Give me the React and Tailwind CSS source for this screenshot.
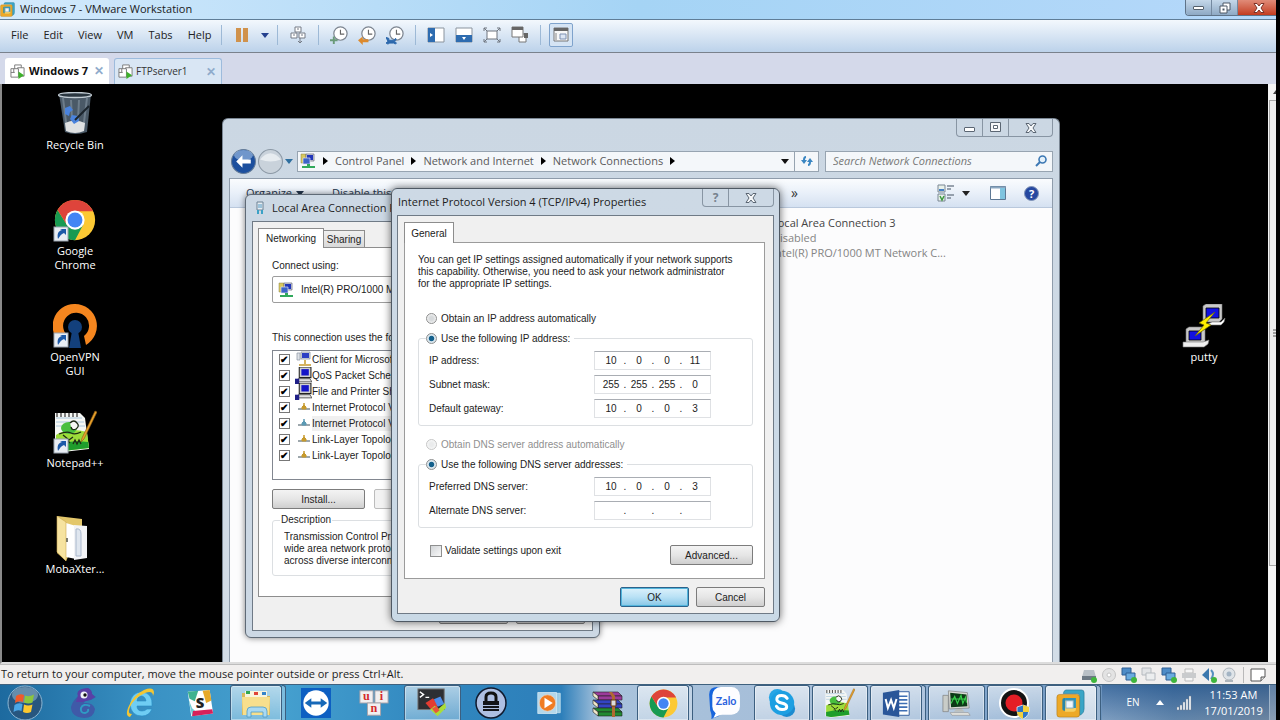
import { useState } from "react";
import clsx from "clsx";

/* ---------- small drawings ---------- */

const Svg = ({ size = 32, box = 32, className, children }) => (
  <svg width={size} height={size} viewBox={`0 0 ${box} ${box}`} className={clsx("shrink-0", className)} aria-hidden="true">
    {children}
  </svg>
);

const ArrowDown = ({ className }) => (
  <svg width="8" height="5" viewBox="0 0 8 5" className={clsx("shrink-0", className)} aria-hidden="true">
    <path d="M0 0h8L4 5z" fill="currentColor" />
  </svg>
);

const ArrowRight = () => (
  <svg width="5" height="8" viewBox="0 0 5 8" className="shrink-0 text-black" aria-hidden="true">
    <path d="M0 0v8l5-4z" fill="currentColor" />
  </svg>
);

const VmwareIcon = ({ size }) => (
  <Svg size={size}>
    <path d="M11 1h17q3 0 3 3v18q0 4-3 6l-2 1V8q0-3-3-3H8q1-4 3-4z" fill="#3aa5c6" stroke="#1c6f8d" strokeWidth=".6" />
    <path d="M4 6h19q3 0 3 3v19q0 3-3 3H4q-3 0-3-3V9q0-3 3-3z" fill="#eda928" stroke="#a9741a" strokeWidth=".6" />
    <path d="M7 12q0-2 2-2h12v14H9q-2 0-2-2z" fill="#2887a8" />
    <path d="M10 10h12v12q0 3-3 3H10z" fill="#f6cf62" />
    <path d="M10 10h12v11h-3v-8h-9z" fill="#2f93b8" />
    <rect x="11" y="13" width="8" height="8" fill="#eef6fb" stroke="#7ba8c4" />
  </Svg>
);

const VmTabIcon = () => (
  <Svg size={15} box={16}>
    <g fill="#fff" stroke="#777" strokeWidth="1">
      <path d="M5 1h7v7H5z" />
      <path d="M8 4h7v9H8z" />
      <path d="M1 5h8v9H1z" />
      <path d="M4 5v4M1 9h4" />
    </g>
    <path d="M9 8l6 4-6 4z" fill="#3db02a" />
  </Svg>
);

const ClockFace = ({ children }) => (
  <Svg size={19} box={20}>
    <circle cx="11" cy="8" r="7" fill="#fff" stroke="#7d8590" strokeWidth="1.3" />
    <path d="M11 4v4.500h4" fill="none" stroke="#666" strokeWidth="1.2" />
    {children}
  </Svg>
);

const ChromeIcon = ({ size = 42 }) => (
  <Svg size={size} box={48}>
    <circle cx="24" cy="24" r="23" fill="#fcc934" />
    <path d="M4.100 12.500A23 23 0 0 0 24 47L33.500 29 24 24 14.500 29z" fill="#189a52" />
    <path d="M4.100 12.500L14.500 29 24 14h20.700a23 23 0 0 0-.8-1.500A23 23 0 0 0 4.100 12.500z" fill="#de443b" />
    <circle cx="24" cy="24" r="11" fill="#fff" />
    <circle cx="24" cy="24" r="8.500" fill="#4285f4" />
  </Svg>
);

const Shortcut = () => (
  <g>
    <rect x="1" y="29" width="14" height="14" fill="#e9eef4" stroke="#9aa4b0" />
    <path d="M5 41c-1-5 0-8 4-9l-2-1h6v6l-2-2c-3 1-4 3-6 6z" fill="#1d5aa8" />
  </g>
);

const RecycleBinIcon = () => (
  <Svg size={44} box={44}>
    <path d="M6 2h32l-4 38q-12 4-22 0z" fill="#4a5967" />
    <path d="M10 6l4 32M34 6l-4 32M18 8l1 20M26 8l-1 20" stroke="#8595a3" strokeWidth="2" opacity=".6" />
    <path d="M12 31q10-5 20 0l-1 8q-9 4-18 0z" fill="#dfe1e2" />
    <path d="M12 16l5-2 3 4-3 2-1 4-4-2zM17 27l2-4 6 1 1 5-5 3z" fill="#4a83dd" />
    <path d="M22 28L36 14" stroke="#1b242c" strokeWidth="2" />
    <ellipse cx="22" cy="3" rx="16.500" ry="2.500" fill="#2a3640" stroke="#c2ccd4" strokeWidth="1.300" />
  </Svg>
);

const ChromeShortcut = () => (
  <div className="relative h-11 w-11 p-px">
    <ChromeIcon size={42} />
    <Svg size={44} box={44} className="absolute left-0 top-0">
      <Shortcut />
    </Svg>
  </div>
);

const OpenVpnIcon = () => (
  <Svg size={44} box={44}>
    <path d="M22 0a22 22 0 0 0-13 40l5-9a13 13 0 1 1 17 1l2 9A22 22 0 0 0 22 0z" fill="#f5861f" />
    <circle cx="22" cy="23" r="7" fill="#13407c" />
    <path d="M19 27h6l3 17H16z" fill="#13407c" />
    <Shortcut />
  </Svg>
);

const NotepadIcon = ({ size = 44, shortcut = true }) => (
  <Svg size={size} box={44}>
    <path d="M2 3h25l5 5 4 31-26 3L2 40z" fill="#f5f7f4" />
    <path d="M3 8h26M3 12h28M3 16h29" stroke="#aac6dc" strokeWidth="1" />
    <path d="M4 3v4M8 3v4M12 3v4M16 3v4M20 3v4M24 3v4" stroke="#555" strokeWidth="1.500" />
    <path d="M3 25q12-8 31-3l2 16-26 3-7-2z" fill="#9ddc3a" />
    <path d="M3 34q16-4 32-2l1 6-26 3-7-1z" fill="#1f9d2c" />
    <ellipse cx="16" cy="18" rx="8" ry="6" fill="#49bf3f" />
    <path d="M17 13q4-4 7 0 3 3-1 6-4 2-5-2" fill="#f5f7f4" stroke="#1d2b15" strokeWidth="1.300" />
    <path d="M6 24q8-3 12-1t10-1M10 25l6 5 4-3M14 30l3 3M20 34l2-4 2 4 2-4 2 4" fill="none" stroke="#1d2b15" strokeWidth="1.300" />
    <path d="M42 1l2 1-13 27-3 3 1-4z" fill="#e8a12b" stroke="#8b5a16" strokeWidth=".6" />
    {shortcut && <Shortcut />}
  </Svg>
);

const FolderIcon = () => (
  <Svg size={46} box={46}>
    <path d="M5 0l25 3v9l-16 33L5 37z" fill="#e3c76b" />
    <path d="M14 7l10 3v33l-10-2z" fill="#fff" />
    <path d="M22 9l13 1v32l-13 2z" fill="#f2f3f6" />
    <path d="M24 13q5-1 5 5v22h-5z" fill="#dfe6ef" stroke="#a9b7cc" strokeWidth="1" />
    <path d="M5 0l9 6v39L5 36z" fill="#f6e3a0" stroke="#cda94e" strokeWidth=".6" />
    <path d="M15 22v4" stroke="#554" strokeWidth="1.500" />
  </Svg>
);

const PuttyIcon = () => (
  <Svg size={44} box={44}>
    <g fill="#c9c9c9" stroke="#777" strokeWidth=".6">
      <path d="M21 2l3-2h16v15l-3 3H21z" />
      <path d="M30 18h9l4-4-1 4-3 3H24z" fill="#fff" />
      <path d="M4 25l3-2h16v15l-3 3H4z" />
      <path d="M1 38h20l6-2-1 4-4 3H1z" fill="#efefef" />
    </g>
    <path d="M24 4h13v10H24zM7 27h12v9H7z" fill="#1212e0" stroke="#000" strokeWidth=".8" />
    <path d="M33 8L17 19l5 2-9 11 16-11-5-2z" fill="#ffee00" stroke="#6c6500" strokeWidth=".7" />
  </Svg>
);

const PcIcon = ({ size = 16 }) => (
  <Svg size={size} box={16}>
    <path d="M1 1h5v9H1z" fill="#d8c85c" stroke="#88814a" strokeWidth=".5" />
    <path d="M6 1h8v7H6z" fill="#d4dbe6" stroke="#667" strokeWidth=".7" />
    <path d="M7 2h6v5H7z" fill="#2136ba" />
    <path d="M3 5h7v6H3z" fill="#3c64c8" stroke="#dde" strokeWidth=".7" />
    <path d="M7 11h3v2h5v2H2v-2h5z" fill="#31a95c" />
  </Svg>
);

const ClientIcon = () => (
  <Svg size={16} box={16}>
    <path d="M1 2h3v7H1z" fill="#dfe3e8" stroke="#8a94a0" strokeWidth=".7" />
    <path d="M5 1h9v7H5z" fill="#dde2ea" stroke="#7c8694" strokeWidth=".7" />
    <path d="M6 2h7v5H6z" fill="#2b3fc4" />
    <path d="M9 9v4M3 14h12" stroke="#c79a2c" strokeWidth="1.500" />
  </Svg>
);

const ServiceIcon = () => (
  <Svg size={17} box={16}>
    <path d="M4 0h11v10H4z" fill="#cfcfcf" stroke="#222" strokeWidth="1" />
    <path d="M6 2h7v6H6z" fill="#1414c8" />
    <path d="M3 11h11l2 3H3z" fill="#e2e2e2" stroke="#333" strokeWidth=".7" />
    <path d="M0 11h4v5H0z" fill="#202088" />
  </Svg>
);

const ProtocolIcon = ({ color }) => (
  <Svg size={14} box={14}>
    <path d="M1 9h12" stroke="#7c8a90" strokeWidth="1.500" />
    <path d="M5 9V7l2-2 2 2v2z" fill={color} stroke={color} />
    <path d="M7 3v3" stroke={color} strokeWidth="1.500" />
  </Svg>
);

const CaptionX = ({ fill = "#f5f7f9", stroke = "#5b6673" }) => (
  <svg width="12" height="10" viewBox="0 0 12 10" aria-hidden="true">
    <path d="M1 .5h3l2 2.500 2-2.500h3L8 5l3 4.500H8L6 7 4 9.500H1L4 5z" fill={fill} stroke={stroke} strokeWidth="1" />
  </svg>
);

/* ---------- taskbar pictures ---------- */

const StartOrb = () => (
  <Svg size={36} box={36}>
    <circle cx="18" cy="18" r="17" fill="#27567f" stroke="#8db6d3" strokeWidth="1" />
    <ellipse cx="18" cy="10" rx="13" ry="8" fill="#a3c3d9" opacity=".5" />
    <path d="M9 11q4-3 8-1l-1 7q-4-2-8 1z" fill="#f0592a" />
    <path d="M18 10.500q4 2 9-1l-1.500 8q-4 2-8.500 0z" fill="#8cc63e" />
    <path d="M7.500 20q4-3 8-1l-1 7q-4-2-8 1z" fill="#4aa7e8" />
    <path d="M17 19.500q4 2 8.500 0L24 27q-4 2-8 0z" fill="#fdc82f" />
  </Svg>
);

const ChameleonIcon = () => (
  <Svg>
    <path d="M11 9Q9 4 15 2l6-1q4 2 4 6l4 3-5 3q-7 0-7 3 9-1 11 6-1 9-11 9-13-1-13-11 1-5 7-11z" fill="#3f5aa8" />
    <path d="M11 9Q9 4 15 2l6-1q4 2 4 6l3 3-5 3-8 2-6 0z" fill="#5a3fa6" />
    <path d="M23 19q-7-3-9 2-1 5 4 5 4-1 3-4" fill="none" stroke="#2f9bc4" strokeWidth="2" />
    <circle cx="17" cy="8" r="3.500" fill="#f0f3f8" />
    <circle cx="18" cy="8" r="1.700" fill="#111" />
  </Svg>
);

const IeIcon = () => (
  <Svg>
    <path d="M27 19H12q0 5 5 5 3 0 5-2h5q-3 7-10 7Q6 29 5 17 6 5 17 5q11 1 10 14zM12 14h9q-1-5-5-5-4 1-4 5z" fill="#6fcdf3" stroke="#258cc5" strokeWidth=".6" />
    <path d="M5 30q-5-1-2-9Q8 8 19 3q10-4 10 3l-1 3q0-6-8-3Q9 11 5 20q-3 7 2 7z" fill="#f3c634" />
  </Svg>
);

const SlackIcon = () => (
  <Svg size={28}>
    <path d="M2 3l25-2 4 27-25 3z" fill="#fff" />
    <path d="M2 3l12-1-4 12-6-3z" fill="#3fb28f" />
    <path d="M19 2l8-1 2 12-6 3z" fill="#e6a92a" />
    <path d="M3 12l4 19 9-1-9-8z" fill="#6fcbd3" />
    <path d="M8 25l22-2 1 5-24 3z" fill="#d7205a" />
    <text x="16" y="22" textAnchor="middle" fontSize="17" fontWeight="800" fontFamily="Open Sans, sans-serif" fill="#222">S</text>
  </Svg>
);

const ExplorerIcon = () => (
  <Svg>
    <path d="M2 6h10l3 3h15v19H2z" fill="#d9b85b" />
    <path d="M5 4h22v6H5z" fill="#f8f4df" />
    <path d="M6 4h4v3H6z" fill="#34a853" />
    <path d="M14 5h4v3h-4z" fill="#df4438" />
    <path d="M22 5h4v3h-4z" fill="#3684ca" />
    <path d="M2 10h28l-1 18H3z" fill="#f7df8d" />
    <path d="M7 30v-6q0-4 4-4h12q4 0 4 4v6h-4v-5H11v5z" fill="#a9d9f2" stroke="#4d9ac7" strokeWidth=".8" />
  </Svg>
);

const TeamViewerIcon = () => (
  <Svg size={30}>
    <rect width="32" height="32" fill="#0d5fc2" />
    <circle cx="16" cy="16" r="13.500" fill="#fff" />
    <path d="M4 16l7-5v3.500h10V11l7 5-7 5v-3.500H11V21z" fill="#1668b8" />
  </Svg>
);

const UnikeyIcon = () => (
  <Svg size={30}>
    {[["u", 1, 3], ["i", 17, 3], ["n", 9, 16]].map(([ch, x, y]) => (
      <g key={ch}>
        <rect x={x} y={y} width="14" height="13" fill="#f1eff0" stroke="#a9a2a8" />
        <text x={x + 7} y={y + 10} textAnchor="middle" fontSize="13" fontWeight="700" fontFamily="Liberation Serif, serif" fill="#d52a2a">{ch}</text>
      </g>
    ))}
  </Svg>
);

const MobaIcon = () => (
  <Svg size={30}>
    <rect x="1" y="1" width="28" height="22" fill="#2d2f33" stroke="#777" />
    <path d="M3 4l4 3-4 3M9 10h4" fill="none" stroke="#fff" strokeWidth="1.500" />
    <path d="M9 16l8-5 6 7-8 5z" fill="#e33c31" />
    <path d="M18 12l7-3 4 8-7 3z" fill="#4d8de8" />
    <path d="M14 23l5-4 4 3 7-6 1 5-9 9z" fill="#a9dd3a" />
    <path d="M16 22l5-3 3 5-4 3z" fill="#e8553b" />
  </Svg>
);

const LockIcon = () => (
  <Svg>
    <circle cx="16" cy="16" r="15" fill="#aebfe2" stroke="#111a2e" strokeWidth="1.500" />
    <path d="M11 15v-5q0-4 5-4t5 4v5" fill="none" stroke="#111" strokeWidth="3" />
    <path d="M8 14h16v4H8zM8 19h16v2H8zM8 22h16v2H8z" fill="#14151a" />
  </Svg>
);

const MediaIcon = () => (
  <Svg size={24}>
    <path d="M8 3h23v26H8z" fill="#9ccbe3" stroke="#c9e3ef" />
    <path d="M1 2h25v28H1z" fill="#b3d7ea" stroke="#d5eaf4" />
    <circle cx="14" cy="16" r="11" fill="#f07c22" stroke="#e7d6c8" />
    <path d="M10 9l11 7-11 7z" fill="#fff" />
  </Svg>
);

const WinrarIcon = () => (
  <Svg>
    {[["#9b3b9b", 5], ["#3344c4", 13], ["#228a32", 21]].map(([c, y]) => (
      <g key={y}>
        <path d={`M2 ${y}h25l4 4H7z`} fill={c} stroke="#222" strokeWidth=".6" />
        <path d={`M7 ${y + 4}h24v4H7z`} fill={c} stroke="#222" strokeWidth=".6" />
        <path d={`M2 ${y}l5 4v4l-5-4z`} fill="#f1e8cb" stroke="#222" strokeWidth=".6" />
      </g>
    ))}
    <path d="M18 5h3l3 4v21h-3V10z" fill="#b06a31" />
    <path d="M20 13h5v6h-5z" fill="#ddd" stroke="#6b3a15" />
  </Svg>
);

const ZaloIcon = () => (
  <Svg size={34}>
    <path d="M2 8q0-7 8-7h5Q5 7 6 17q1 8 6 11l-8 3q1-3-1-8z" fill="#1765dd" />
    <rect x="5" y="1" width="26" height="26" rx="8" fill="#fdfdff" />
    <path d="M9 24l-3 6 9-4z" fill="#fff" />
    <text x="18" y="18" textAnchor="middle" fontSize="10" fontWeight="700" fontFamily="Lato, sans-serif" fill="#2a62dd">Zalo</text>
  </Svg>
);

const SkypeIcon = () => (
  <Svg size={30}>
    <circle cx="11" cy="10" r="9" fill="#27a5e5" />
    <circle cx="21" cy="22" r="9" fill="#1b8bd0" />
    <circle cx="16" cy="16" r="13" fill="#1c9fe2" />
    <path d="M21.500 11q-2-3-6-3-5 0-5 4 0 3 5 4 5.500 1 5.500 4t-5 3q-4 0-6-3.500" fill="none" stroke="#fff" strokeWidth="3.200" strokeLinecap="round" />
  </Svg>
);

const WordIcon = () => (
  <Svg size={29}>
    <path d="M14 3h16v26H14z" fill="#fff" stroke="#2b579a" />
    <path d="M18 8h10M18 12h10M18 16h10M18 20h10M18 24h10" stroke="#3f6fb4" strokeWidth="1.700" />
    <path d="M1 4l18-3v30L1 28z" fill="#2a5699" />
    <path d="M4 11l2.500 10L10 12l3 9 3-10" fill="none" stroke="#fff" strokeWidth="2.200" />
  </Svg>
);

const MonitorIcon = () => (
  <Svg size={29}>
    <path d="M1 7h6v18H1z" fill="#c9ccc8" stroke="#777" strokeWidth=".7" />
    <path d="M7 2l21 2 2 17-22 1z" fill="#d9dad5" stroke="#777" strokeWidth=".7" />
    <path d="M9 4l18 2 1 13-18 1z" fill="#0d3a16" />
    <path d="M10 16l4-8 3 8 4-9 2 9 3-7 1 6M10 11h16" fill="none" stroke="#38d34c" strokeWidth="1.200" />
    <path d="M16 22h6l3 3H13z" fill="#bcbfbd" />
    <path d="M9 26h20l2 3H11z" fill="#e4e4df" stroke="#888" strokeWidth=".6" />
  </Svg>
);

const RecordIcon = () => (
  <Svg>
    <circle cx="15" cy="16" r="14" fill="#131313" stroke="#fff" strokeWidth="2" />
    <circle cx="15" cy="16" r="8.500" fill="#e41e26" />
    <path d="M18 20l6-2 6 2q1 9-6 12-7-3-6-12z" fill="#2d76c5" stroke="#fff" strokeWidth=".7" />
    <path d="M24 18l6 2v5h-6zM18 25h6v7q-6-3-6-7z" fill="#f3d13d" />
  </Svg>
);

/* ---------- data ---------- */

const menus = ["File", "Edit", "View", "VM", "Tabs", "Help"];

const desktopIcons = [
  { name: "Recycle Bin", Icon: RecycleBinIcon },
  { name: "Google Chrome", Icon: ChromeShortcut },
  { name: "OpenVPN GUI", Icon: OpenVpnIcon },
  { name: "Notepad++", Icon: NotepadIcon },
  { name: "MobaXter...", Icon: FolderIcon },
];

const connectionItems = [
  { label: "Client for Microsoft", icon: <ClientIcon /> },
  { label: "QoS Packet Scheduler", icon: <ServiceIcon /> },
  { label: "File and Printer Sharing", icon: <ServiceIcon /> },
  { label: "Internet Protocol V6", icon: <ProtocolIcon color="#c79a2c" /> },
  { label: "Internet Protocol V4", icon: <ProtocolIcon color="#5c9ab4" />, selected: true },
  { label: "Link-Layer Topology", icon: <ProtocolIcon color="#c79a2c" /> },
  { label: "Link-Layer Topology", icon: <ProtocolIcon color="#c79a2c" /> },
];

const taskbarApps = [
  { name: "Chameleon", icon: <ChameleonIcon /> },
  { name: "Internet Explorer", icon: <IeIcon /> },
  { name: "Slack", icon: <SlackIcon /> },
  { name: "Explorer", icon: <ExplorerIcon />, open: true, stacked: true },
  { name: "TeamViewer", icon: <TeamViewerIcon /> },
  { name: "UniKey", icon: <UnikeyIcon /> },
  { name: "MobaXterm", icon: <MobaIcon />, open: true },
  { name: "Password safe", icon: <LockIcon /> },
  { name: "Media Player", icon: <MediaIcon /> },
  { name: "WinRAR", icon: <WinrarIcon /> },
  { name: "Chrome", icon: <ChromeIcon size={29} />, open: true, stacked: true },
  { name: "Zalo", icon: <ZaloIcon /> },
  { name: "Skype", icon: <SkypeIcon />, open: true },
  { name: "Notepad", icon: <NotepadIcon size={31} shortcut={false} />, open: true },
  { name: "Word", icon: <WordIcon />, open: true, stacked: true },
  { name: "Monitor", icon: <MonitorIcon />, open: true },
  { name: "Recorder", icon: <RecordIcon />, open: true },
  { name: "VMware", icon: <VmwareIcon size={29} />, open: true, stacked: true, active: true },
];

/* ---------- host window ---------- */

function TitleBar() {
  return (
    <header className="flex h-5 shrink-0 items-start border-b border-[#5f7d97] bg-gradient-to-r from-[#d3eafc] via-[#a5d4f5] to-[#b5d8fa]">
      <div className="flex h-[19px] flex-1 items-center gap-[5px]">
        <VmwareIcon size={15} />
        <h1 className="text-[11px] text-[#1a1a1a]">Windows 7 - VMware Workstation</h1>
      </div>
      <div className="flex h-4 overflow-hidden rounded-bl border-b border-l border-[#5f7388]">
        <button aria-label="Minimize" className="flex w-[26px] items-center justify-center border-r border-[#7489a0] bg-gradient-to-b from-[#c5d8ea] to-[#8ea9c4]">
          <span className="h-1 w-[11px] rounded-[1px] border border-[#55606c] bg-white" />
        </button>
        <button aria-label="Restore" className="flex w-[26px] items-center justify-center border-r border-[#7489a0] bg-gradient-to-b from-[#c5d8ea] to-[#8ea9c4]">
          <Svg size={12} box={12}>
            <path d="M4 1h7v7H4z" fill="#fff" stroke="#4c5866" />
            <path d="M1 4h7v7H1z" fill="#fff" stroke="#4c5866" />
            <path d="M3.500 6.500h2v2h-2z" fill="#4c5866" />
          </Svg>
        </button>
        <button aria-label="Close" className="flex w-[38px] items-center justify-center bg-gradient-to-b from-[#e08b78] to-[#c23a1d] pl-1">
          <CaptionX fill="#fff" stroke="#7d3328" />
        </button>
      </div>
    </header>
  );
}

const Separator = () => <span className="h-5 w-px shrink-0 bg-[#9db9d6]" />;

const ToolButton = ({ label, boxed, children }) => (
  <button
    aria-label={label}
    className={clsx("flex h-6 w-6 shrink-0 items-center justify-center rounded-[2px]", boxed && "border border-[#7fa3cc] bg-[#d5e4f4]")}
  >
    {children}
  </button>
);

function MenuBar() {
  return (
    <div className="flex h-[33px] shrink-0 items-center border-b border-[#79818c] bg-gradient-to-b from-[#f3f8fd] to-[#bcd2ea] pb-[2px] pl-[11px]">
      <nav className="flex w-[210px] gap-[15px] text-[11px] text-[#222]">
        {menus.map((m) => (
          <button key={m}>{m}</button>
        ))}
      </nav>
      <Separator />
      <div className="flex items-center gap-[7px] px-2">
        <ToolButton label="Suspend">
          <Svg size={14} box={14}>
            <path d="M1 0h5v14H1zM8 0h5v14H8z" fill="#d0924c" />
          </Svg>
        </ToolButton>
        <ArrowDown className="text-[#24408e]" />
      </div>
      <Separator />
      <div className="px-2">
        <ToolButton label="Send Ctrl+Alt+Del">
          <Svg size={18} box={18}>
            <g fill="#fff" stroke="#747b85">
              <path d="M6 1h6v5H6zM2 7h6v5H2zM10 7h6v5h-6z" />
              <path d="M4 9h2M12 9h2M8 3h2M11 12v5M9 15l2 2 2-2" fill="none" />
            </g>
          </Svg>
        </ToolButton>
      </div>
      <Separator />
      <div className="flex gap-1 px-2">
        <ToolButton label="Take snapshot">
          <ClockFace>
            <path d="M4 11v8M0 15h8" stroke="#6a9a78" strokeWidth="2" />
          </ClockFace>
        </ToolButton>
        <ToolButton label="Revert snapshot">
          <ClockFace>
            <path d="M0 15l5-4v3h6v3H5v3z" fill="#dc8a2e" />
          </ClockFace>
        </ToolButton>
        <ToolButton label="Manage snapshots">
          <ClockFace>
            <path d="M0 12l3 1v2h5l2-2 1 1-2 2 2 2-1 1-2-1H4l-2 1-2-1 2-2z" fill="#2d69ad" stroke="#2d69ad" />
          </ClockFace>
        </ToolButton>
      </div>
      <Separator />
      <div className="flex gap-1 px-2">
        <ToolButton label="Show library">
          <Svg size={18} box={18}>
            <path d="M1 2h16v14H1z" fill="#fff" stroke="#8a939d" />
            <path d="M1 2h7v14H1z" fill="#2e6cb0" />
            <path d="M3 7l3 2-3 2z" fill="#fff" />
          </Svg>
        </ToolButton>
        <ToolButton label="Show thumbnails">
          <Svg size={18} box={18}>
            <path d="M1 2h16v14H1z" fill="#fff" stroke="#8a939d" />
            <path d="M1 9h16v7H1z" fill="#2e6cb0" />
            <path d="M7 11h4l-2 3z" fill="#fff" />
          </Svg>
        </ToolButton>
        <ToolButton label="Full screen">
          <Svg size={18} box={18}>
            <path d="M4 5h10v8H4z" fill="#fff" stroke="#6e757e" />
            <path d="M1 5V2h3M14 2h3v3M17 13v3h-3M4 16H1v-3M1 2l3 3M17 2l-3 3M17 16l-3-3M1 16l3-3" fill="none" stroke="#6e757e" />
          </Svg>
        </ToolButton>
        <ToolButton label="Unity">
          <Svg size={18} box={18}>
            <path d="M8 8h7v8H8z" fill="#fff" stroke="#777" />
            <path d="M1 1h11v10H1z" fill="#fff" stroke="#777" />
            <path d="M1 1h11v3H1zM13 7h4v5h-4z" fill="#666" />
          </Svg>
        </ToolButton>
      </div>
      <Separator />
      <div className="px-2">
        <ToolButton label="Console view" boxed>
          <Svg size={16} box={16}>
            <path d="M1 1h14v13H1z" fill="#f7f7f7" stroke="#777" />
            <path d="M1 1h14v3H1z" fill="#666" />
            <path d="M7 7h6v5H7z" fill="#dce6f4" stroke="#7c90b2" />
            <path d="M3 6v7" stroke="#888" />
          </Svg>
        </ToolButton>
      </div>
    </div>
  );
}

function VmTabs() {
  return (
    <div className="flex h-[31px] shrink-0 items-end gap-[5px] bg-[#d4d9ea] pl-[5px]">
      <div className="flex h-[26px] w-[104px] items-center rounded-t-[3px] bg-white pl-[5px]">
        <VmTabIcon />
        <button className="flex-1 pl-1 text-left text-[11px] font-bold text-[#111]">Windows 7</button>
        <button aria-label="Close Windows 7" className="mr-[5px] text-[12px] font-bold text-[#8fabcb]">✕</button>
      </div>
      <div className="flex h-[26px] w-[108px] items-center rounded-t-[3px] border border-b-0 border-[#9dbbdc] bg-[#d9e6f4] pl-[3px]">
        <VmTabIcon />
        <button className="flex-1 pl-[3px] text-left text-[10px] text-[#333]">FTPserver1</button>
        <button aria-label="Close FTPserver1" className="mr-[5px] text-[12px] font-bold text-[#8fabcb]">✕</button>
      </div>
    </div>
  );
}

/* ---------- guest desktop ---------- */

const DesktopIcon = ({ name, Icon, className }) => (
  <button className={clsx("flex w-16 flex-col items-center gap-[2px] text-[11px] leading-[14px] text-white", className)}>
    <span className="flex h-11 items-start">
      <Icon />
    </span>
    <span>{name}</span>
  </button>
);

function ExplorerWindow() {
  return (
    <section className="absolute bottom-0 left-[220px] top-[34px] flex w-[838px] flex-col rounded-t-[6px] border border-b-0 border-[#7b8794] bg-gradient-to-b from-[#cbd7e3] to-[#d3dde7] px-[6px]">
      <div className="flex h-[31px] items-start justify-end">
        <div className="flex h-[18px] rounded-b border border-t-0 border-[#8895a3]">
          <button aria-label="Minimize" className="flex w-[26px] items-center justify-center border-r border-[#8895a3]">
            <span className="mt-1 h-[5px] w-[11px] rounded-[1px] border border-[#5b6673] bg-white" />
          </button>
          <button aria-label="Maximize" className="flex w-[26px] items-center justify-center border-r border-[#8895a3]">
            <Svg size={11} box={11}>
              <path d="M.5 .5h10v9H.5z" fill="#f5f7f9" stroke="#5b6673" />
              <path d="M3.500 3.500h4v3h-4z" fill="#fff" stroke="#5b6673" />
            </Svg>
          </button>
          <button aria-label="Close" className="flex w-[43px] items-center justify-center">
            <CaptionX />
          </button>
        </div>
      </div>

      <div className="flex h-[22px] items-center">
        <div className="flex items-center gap-[2px] pl-[2px]">
          <button aria-label="Back">
            <Svg size={25} box={24}>
              <circle cx="12" cy="12" r="11.500" fill="#1c4f9e" stroke="#667d99" />
              <ellipse cx="12" cy="6" rx="9" ry="5" fill="#a9c7ea" opacity=".6" />
              <path d="M5 12l6-6v4h8v4h-8v4z" fill="#fff" />
            </Svg>
          </button>
          <button aria-label="Forward">
            <Svg size={25} box={24}>
              <circle cx="12" cy="12" r="11.500" fill="#c9d2db" stroke="#8c99a6" />
              <path d="M2 10Q12-2 22 10q-10 4-20 0z" fill="#e7ecf0" />
            </Svg>
          </button>
          <ArrowDown className="text-[#2f6f9f]" />
        </div>
        <div className="ml-1 flex h-[21px] flex-1 items-center gap-[7px] border border-[#97a4b1] bg-[#f4f7fa] pl-[2px] text-[11px] text-[#5a5a5a]">
          <PcIcon />
          <ArrowRight />
          <a href="#control-panel">Control Panel</a>
          <ArrowRight />
          <a href="#network-internet">Network and Internet</a>
          <ArrowRight />
          <a href="#network-connections">Network Connections</a>
          <ArrowRight />
          <span className="flex-1" />
          <ArrowDown className="text-[#111]" />
          <button aria-label="Refresh" className="-ml-[2px] flex h-full w-6 items-center justify-center border-l border-[#97a4b1]">
            <Svg size={14} box={14}>
              <path d="M6 2q-3 0-3 4H1l3 4 3-4H5q0-2 1-2zM8 12q3 0 3-4h2l-3-4-3 4h2q0 2-1 2z" fill="#3a86c2" />
            </Svg>
          </button>
        </div>
        <label className="ml-[6px] flex h-[21px] w-[228px] items-center border border-[#97a4b1] bg-[#f4f7fa] pl-[7px] pr-[5px]">
          <input
            type="search"
            aria-label="Search Network Connections"
            placeholder="Search Network Connections"
            className="min-w-0 flex-1 bg-transparent text-[11px] italic outline-none placeholder:text-[#777]"
          />
          <Svg size={12} box={12}>
            <circle cx="7.500" cy="4.500" r="3.500" fill="#e4f1fb" stroke="#3c78b4" strokeWidth="1.600" />
            <path d="M5 7l-4 4" stroke="#3c78b4" strokeWidth="2" />
          </Svg>
        </label>
      </div>

      <div className="mt-[6px] flex min-h-0 flex-1 flex-col border border-b-0 border-[#8f9cab] bg-[#fcfcfd]">
        <div className="flex h-[29px] shrink-0 items-center border-b border-[#b9c8dc] bg-gradient-to-b from-[#fafcfe] via-[#e9f0f9] to-[#d5e1f1] pl-4 pr-[13px] text-[11px] text-[#25364d]">
          <button className="flex w-[86px] items-center gap-1">
            Organize <ArrowDown />
          </button>
          <button className="w-[459px] text-left">Disable this network device</button>
          <button aria-label="More commands" className="text-[14px] leading-none text-[#333]">»</button>
          <span className="flex-1" />
          <button aria-label="Change your view" className="flex items-center gap-[7px] text-[#222]">
            <Svg size={18} box={18}>
              <path d="M1 1h7v7H1zM1 10h7v7H1z" fill="#e9f1ea" stroke="#7b8794" />
              <path d="M2 5h5v2H2z" fill="#4580c5" />
              <path d="M3 12l2 4 2-4" fill="none" stroke="#3f9a41" strokeWidth="1.500" />
              <path d="M10 2h7M10 5h4M10 11h7M10 14h4" stroke="#7b8794" strokeWidth="1.300" />
            </Svg>
            <ArrowDown />
          </button>
          <button aria-label="Preview pane" className="ml-5">
            <Svg size={16} box={16}>
              <path d="M.5 1.500h15v13H.5z" fill="#fff" stroke="#5d7894" />
              <path d="M.5 1.500h15v2H.5z" fill="#8ba7c0" />
              <path d="M10 3h5v11h-5z" fill="#7ec4e0" />
            </Svg>
          </button>
          <button aria-label="Help" className="ml-[18px] flex h-[15px] w-[15px] items-center justify-center rounded-full border border-[#8094b8] bg-[#2648a0] text-[11px] font-bold leading-none text-white">
            ?
          </button>
        </div>
        <div className="pl-[542px] pt-[7px] text-[11px] leading-[15px] text-[#848484]">
          <p className="text-[#444]">Local Area Connection 3</p>
          <p>Disabled</p>
          <p>Intel(R) PRO/1000 MT Network C...</p>
        </div>
      </div>
    </section>
  );
}

const DialogButton = ({ className, primary, ...props }) => (
  <button
    className={clsx(
      "h-5 rounded-[2px] border text-[#222] disabled:border-[#bcbcbc] disabled:bg-[#f2f2f2] disabled:bg-none",
      primary
        ? "border-[#2c628b] bg-gradient-to-b from-[#dcf1fb] via-[#b9e1f5] to-[#86c6e6] ring-1 ring-inset ring-[#52b5dc]"
        : "border-[#7c7c7c] bg-gradient-to-b from-[#f3f3f3] via-[#e6e6e6] to-[#cfcfcf]",
      className
    )}
    {...props}
  />
);

function LocalAreaDialog() {
  return (
    <section className="absolute left-[243px] top-[110px] w-[355px] rounded-[6px] border border-[#5f6a76] bg-[#ccd8e4] px-[6px] pb-[6px] shadow-[0_0_6px_rgba(0,0,0,0.5)]">
      <header className="flex h-[26px] items-center gap-[5px] pl-px">
        <Svg size={14} box={14}>
          <path d="M4 1h6v8H4z" fill="#e6edf3" stroke="#6d8294" />
          <path d="M5 3h4v4H5z" fill="#9cc3da" />
          <path d="M5 9v4M9 9v4" stroke="#3ba2c6" strokeWidth="2" />
        </Svg>
        <h2 className="whitespace-nowrap text-[11px] text-[#1c1c1c]">Local Area Connection Properties</h2>
      </header>
      <div className="border border-[#6f7a86] bg-[#f0f0f0] p-[5px] pb-[6px] font-['Liberation_Sans',sans-serif] text-[10px] text-[#222]">
        <div role="tablist" className="flex h-5 items-end">
          <button role="tab" aria-selected="true" className="z-10 -mb-px h-5 w-[66px] border border-b-0 border-[#8d8d8d] bg-white">
            Networking
          </button>
          <button role="tab" aria-selected="false" className="h-[17px] w-[41px] border border-b-0 border-l-0 border-[#8d8d8d] bg-gradient-to-b from-[#f0f0f0] to-[#d9d9d9]">
            Sharing
          </button>
        </div>
        <div className="flex flex-col border border-[#8d8d8d] bg-white px-[13px] pb-5 pt-[10px]">
          <p className="h-4 leading-4">Connect using:</p>
          <div className="mt-[2px] flex h-[27px] items-center gap-[7px] rounded-[2px] border border-[#9d9d9d] pl-[5px]">
            <PcIcon />
            <span className="whitespace-nowrap">Intel(R) PRO/1000 MT</span>
          </div>
          <p className="mt-[27px] h-4 leading-4">This connection uses the following items:</p>
          <ul className="mt-1 h-[130px] overflow-hidden border border-[#828790]">
            {connectionItems.map((it, i) => (
              <li key={i}>
                <label className="flex h-4 items-center pl-[6px]">
                  <input
                    type="checkbox"
                    defaultChecked
                    className="h-[11px] w-[11px] shrink-0 appearance-none border border-[#777] bg-white checked:after:block checked:after:text-[10px] checked:after:font-bold checked:after:leading-[9px] checked:after:text-black checked:after:content-['✔']"
                  />
                  <span className="ml-[5px] flex w-[17px] justify-center">{it.icon}</span>
                  <span className={clsx("whitespace-nowrap", it.selected && "bg-[#f0f0f0]")}>{it.label}</span>
                </label>
              </li>
            ))}
          </ul>
          <div className="mt-[9px] flex gap-[9px]">
            <DialogButton className="w-[93px]">Install...</DialogButton>
            <DialogButton className="w-[93px]" disabled aria-label="Uninstall" />
            <DialogButton className="w-[93px]" aria-label="Properties" />
          </div>
          <fieldset className="mt-[3px] h-16 min-w-0 rounded-[3px] border border-[#dcdfe2] pl-[11px]">
            <legend className="-ml-1 px-[1px] leading-4">Description</legend>
            <p className="overflow-hidden whitespace-nowrap pt-[3px] leading-3">
              Transmission Control Protocol
              <br />
              wide area network protocol
              <br />
              across diverse interconnected
            </p>
          </fieldset>
        </div>
        <div className="mt-[7px] flex justify-end gap-2 pr-[2px]">
          <DialogButton className="w-[69px]" aria-label="OK" />
          <DialogButton className="w-[69px]" aria-label="Cancel" />
        </div>
      </div>
    </section>
  );
}

const Radio = ({ label, ...props }) => (
  <label className={clsx("flex h-4 items-center gap-1", props.disabled && "text-[#8f8f8f]")}>
    <input
      type="radio"
      className="h-[11px] w-[11px] shrink-0 appearance-none rounded-full border border-[#8e8f8f] bg-[radial-gradient(circle,#d6d9db_30%,#f6f6f6_80%)] checked:bg-[radial-gradient(circle,#14608c_0_35%,#d9e6ee_50%)] disabled:opacity-50"
      {...props}
    />
    {label}
  </label>
);

function IpField({ label, value }) {
  const octets = value ? value.split(".") : ["", "", "", ""];
  return (
    <div role="group" aria-label={label} className="flex h-5 items-center">
      <span className="w-[165px]">{label}</span>
      <div className="flex h-[19px] w-[117px] items-center border border-[#dfe1e4] border-t-[#a9adb3] bg-white pl-1">
        {octets.map((o, i) => (
          <span key={i} className="flex items-center">
            {i > 0 && <span className="w-1 text-center">.</span>}
            <input aria-label={`${label} octet ${i + 1}`} defaultValue={o} className="w-6 bg-transparent text-center outline-none" />
          </span>
        ))}
      </div>
    </div>
  );
}

function Ipv4Dialog() {
  const [mode, setMode] = useState("static");

  return (
    <section className="absolute left-[389px] top-[104px] w-[389px] rounded-[6px] border border-[#4f5964] bg-gradient-to-b from-[#cdd9e5] to-[#c9d9e6] px-[5px] pb-[7px] shadow-[0_0_8px_rgba(0,0,0,0.6)]">
      <header className="flex h-[26px] items-start">
        <h2 className="flex-1 pl-px text-[11px] leading-[26px] text-[#1c1c1c]">Internet Protocol Version 4 (TCP/IPv4) Properties</h2>
        <div className="flex h-[18px] rounded-b border border-t-0 border-[#8895a3]">
          <button aria-label="Help" className="w-[26px] border-r border-[#8895a3] text-[12px] font-bold leading-none text-[#77828e]">?</button>
          <button aria-label="Close" className="flex w-[44px] items-center justify-center">
            <CaptionX />
          </button>
        </div>
      </header>
      <div className="border border-[#6f7a86] bg-[#f0f0f0] py-[6px] pl-[6px] pr-2 font-['Liberation_Sans',sans-serif] text-[10px] text-[#222]">
        <div role="tablist" className="flex h-5">
          <button role="tab" aria-selected="true" className="z-10 -mb-px w-[50px] border border-b-0 border-[#8d8d8d] bg-white">
            General
          </button>
        </div>
        <form className="border border-[#9b9b9b] bg-white pb-[13px] pl-[13px] pr-[11px] pt-[11px]" onSubmit={(e) => e.preventDefault()}>
          <p className="leading-3">
            You can get IP settings assigned automatically if your network supports
            <br />
            this capability. Otherwise, you need to ask your network administrator
            <br />
            for the appropriate IP settings.
          </p>
          <div className="mt-5 pl-2">
            <Radio name="ip" label="Obtain an IP address automatically" checked={mode === "auto"} onChange={() => setMode("auto")} />
          </div>
          <fieldset className="mt-1 rounded-[3px] border border-[#dcdfe2] pb-[7px] pl-[10px]">
            <legend className="-ml-[3px] pr-1">
              <Radio name="ip" label="Use the following IP address:" checked={mode === "static"} onChange={() => setMode("static")} />
            </legend>
            <div className="flex flex-col gap-1 pt-1">
              <IpField label="IP address:" value="10.0.0.11" />
              <IpField label="Subnet mask:" value="255.255.255.0" />
              <IpField label="Default gateway:" value="10.0.0.3" />
            </div>
          </fieldset>
          <div className="mt-[10px] pl-2">
            <Radio name="dns" label="Obtain DNS server address automatically" disabled />
          </div>
          <fieldset className="mt-1 rounded-[3px] border border-[#dcdfe2] pb-[7px] pl-[10px]">
            <legend className="-ml-[3px] pr-1">
              <Radio name="dns" label="Use the following DNS server addresses:" defaultChecked />
            </legend>
            <div className="flex flex-col gap-1 pt-1">
              <IpField label="Preferred DNS server:" value="10.0.0.3" />
              <IpField label="Alternate DNS server:" />
            </div>
          </fieldset>
          <div className="mt-[17px] flex items-start justify-between pl-3">
            <label className="flex items-center gap-[3px] leading-3">
              <input type="checkbox" className="h-3 w-3 appearance-none border border-[#8e8f8f] bg-gradient-to-br from-[#d2d5d8] to-[#f8f8f8] checked:bg-[#14608c]" />
              Validate settings upon exit
            </label>
            <DialogButton type="button" className="w-[83px]">Advanced...</DialogButton>
          </div>
        </form>
        <div className="mt-2 flex justify-end gap-[7px]">
          <DialogButton className="w-[69px]" primary>OK</DialogButton>
          <DialogButton className="w-[69px]">Cancel</DialogButton>
        </div>
      </div>
    </section>
  );
}

function GuestScreen() {
  return (
    <div className="flex min-h-0 flex-1 border-b-2 border-l-2 border-[#8a8a8a] border-b-[#dcdcdc]">
      <main className="relative min-w-0 flex-1 overflow-hidden bg-black">
        <div className="flex w-[146px] flex-col items-center pt-2">
          {desktopIcons.map((d) => (
            <div key={d.name} className="h-[106px]">
              <DesktopIcon {...d} />
            </div>
          ))}
        </div>
        <DesktopIcon name="putty" Icon={PuttyIcon} className="absolute right-8 top-[220px]" />
        <ExplorerWindow />
        <LocalAreaDialog />
        <Ipv4Dialog />
      </main>
      <div className="flex w-2 shrink-0 flex-col bg-[#f4f4f4]">
        <div className="flex h-4 items-center justify-end">
          <svg width="3" height="4" viewBox="0 0 3 4" aria-hidden="true"><path d="M0 4l3-4v4z" fill="#444" /></svg>
        </div>
        <div className="ml-px flex h-[466px] items-center justify-end border border-r-0 border-[#a7a7a7] bg-[#ececec]">
          <svg width="3" height="8" viewBox="0 0 3 8" aria-hidden="true"><path d="M0 1h3M0 4h3M0 7h3" stroke="#555" /></svg>
        </div>
      </div>
    </div>
  );
}

/* ---------- status bar + taskbar ---------- */

const Dot = () => <circle cx="13" cy="13" r="3" fill="#3fb63c" />;

const devices = [
  { name: "Hard disk", art: <><path d="M3 3h10l2 7H1z" fill="#b9c0c6" /><path d="M1 9h14v4H1z" fill="#6d7984" /><Dot /></> },
  { name: "CD/DVD", art: <><circle cx="8" cy="8" r="6.500" fill="#e3e3e3" stroke="#c4c4c4" /><circle cx="8" cy="8" r="2" fill="#fff" stroke="#c4c4c4" /></> },
  { name: "Network adapter", art: <><path d="M1 1h9v7H1z" fill="#4d8cc7" stroke="#2f5f94" /><path d="M5 6h9v7H5z" fill="#69abdf" stroke="#2f5f94" /><Dot /></> },
  { name: "Network adapter 2", art: <><path d="M1 1h9v7H1z" fill="#e2e4e6" stroke="#b5babf" /><path d="M5 6h9v7H5z" fill="#eceeef" stroke="#b5babf" /></> },
  { name: "Network adapter 3", art: <><path d="M1 1h9v7H1z" fill="#4d8cc7" stroke="#2f5f94" /><path d="M5 6h9v7H5z" fill="#69abdf" stroke="#2f5f94" /><Dot /></> },
  { name: "Printer", art: <><path d="M4 2h8v4H4zM4 10h8v4H4z" fill="#f6f6f6" stroke="#bbb" /><path d="M1 6h14v5H1z" fill="#c9cbcd" /></> },
  { name: "Sound", art: <><path d="M1 8l7-7v13z" fill="#3b78ae" /><path d="M10 3q4 4 0 9" fill="none" stroke="#5590bf" strokeWidth="2" /><Dot /></> },
  { name: "Camera", art: <><circle cx="8" cy="7" r="6" fill="#dfe4e8" stroke="#aeb5bb" /><circle cx="8" cy="7" r="2.500" fill="#a3b4c4" /><path d="M4 14h8" stroke="#aeb5bb" strokeWidth="2" /></> },
];

function StatusBar() {
  return (
    <footer className="flex h-5 shrink-0 items-center border-t border-[#bdbdbd] bg-[#f1efee] pl-px pr-[10px] text-[11px] text-[#1c1c1c]">
      <p className="flex-1">To return to your computer, move the mouse pointer outside or press Ctrl+Alt.</p>
      <div className="flex gap-1">
        {devices.map((d) => (
          <button key={d.name} aria-label={d.name}>
            <Svg size={16} box={16}>{d.art}</Svg>
          </button>
        ))}
      </div>
      <span className="mx-[6px] h-4 w-px bg-[#b9b9b9]" />
      <button aria-label="Message log">
        <Svg size={16} box={16}>
          <path d="M1 2h14v8l-4 4H1z" fill="#fff" stroke="#555" />
          <path d="M11 14v-4h4" fill="#ddd" stroke="#555" />
        </Svg>
      </button>
    </footer>
  );
}

function Taskbar() {
  return (
    <div className="flex h-9 shrink-0 overflow-hidden border-t border-[#3f617e] bg-[linear-gradient(90deg,#1d6a9f_0%,#3a92c4_12%,#45a0cf_22%,#3187bf_34%,#2d7fba_44%,#a9c3dc_47%,#a5bdd8_64%,#7ea3cb_78%,#6f96bf_86%,#44719f_92%,#54708f_100%)]">
      <button aria-label="Start" className="flex w-[54px] shrink-0 justify-center pr-1">
        <StartOrb />
      </button>
      <nav className="flex min-w-0 flex-1">
        {taskbarApps.map((app) => (
          <div key={app.name} className="flex min-w-0 flex-1 px-px">
            <button
              aria-label={app.name}
              className={clsx(
                "flex min-w-0 flex-1 items-center justify-center rounded-t-[3px]",
                app.open && "border border-b-0 border-[#3c5f80] bg-gradient-to-b from-white/60 to-white/30 ring-1 ring-inset ring-white/40",
                app.active && "bg-white/50"
              )}
            >
              {app.icon}
            </button>
            {app.stacked && <span className="w-1 rounded-tr-[3px] border-r border-t border-[#3c5f80] bg-white/30" />}
          </div>
        ))}
      </nav>
      <div className="flex w-[174px] shrink-0 items-center bg-gradient-to-b from-[#28588f]/60 to-[#a7b6c8]/30 text-[11px] text-white">
        <button className="w-[62px] text-[10px]">EN</button>
        <button aria-label="Show hidden icons" className="-ml-2 w-[10px]">
          <svg width="8" height="5" viewBox="0 0 8 5" aria-hidden="true"><path d="M0 5h8L4 0z" fill="#fff" /></svg>
        </button>
        <Svg size={16} box={16} className="ml-[10px]">
          <path d="M1 12h2v3H1zM4 10h2v5H4zM7 7h2v8H7zM10 4h2v11h-2zM13 1h2v14h-2z" fill="#fff" stroke="#6d7f93" strokeWidth=".5" />
        </Svg>
        <div className="flex-1 pl-[6px] text-center leading-4">
          <p>11:53 AM</p>
          <p>17/01/2019</p>
        </div>
        <button aria-label="Show desktop" className="h-full w-[7px] border-l border-[#9fb4c9] bg-white/20" />
      </div>
    </div>
  );
}

export default function App() {
  return (
    <div className="flex h-screen flex-col overflow-hidden border-r-4 border-black bg-[#f0f0f0] font-['Open_Sans',sans-serif]">
      <TitleBar />
      <MenuBar />
      <VmTabs />
      <GuestScreen />
      <StatusBar />
      <Taskbar />
    </div>
  );
}
